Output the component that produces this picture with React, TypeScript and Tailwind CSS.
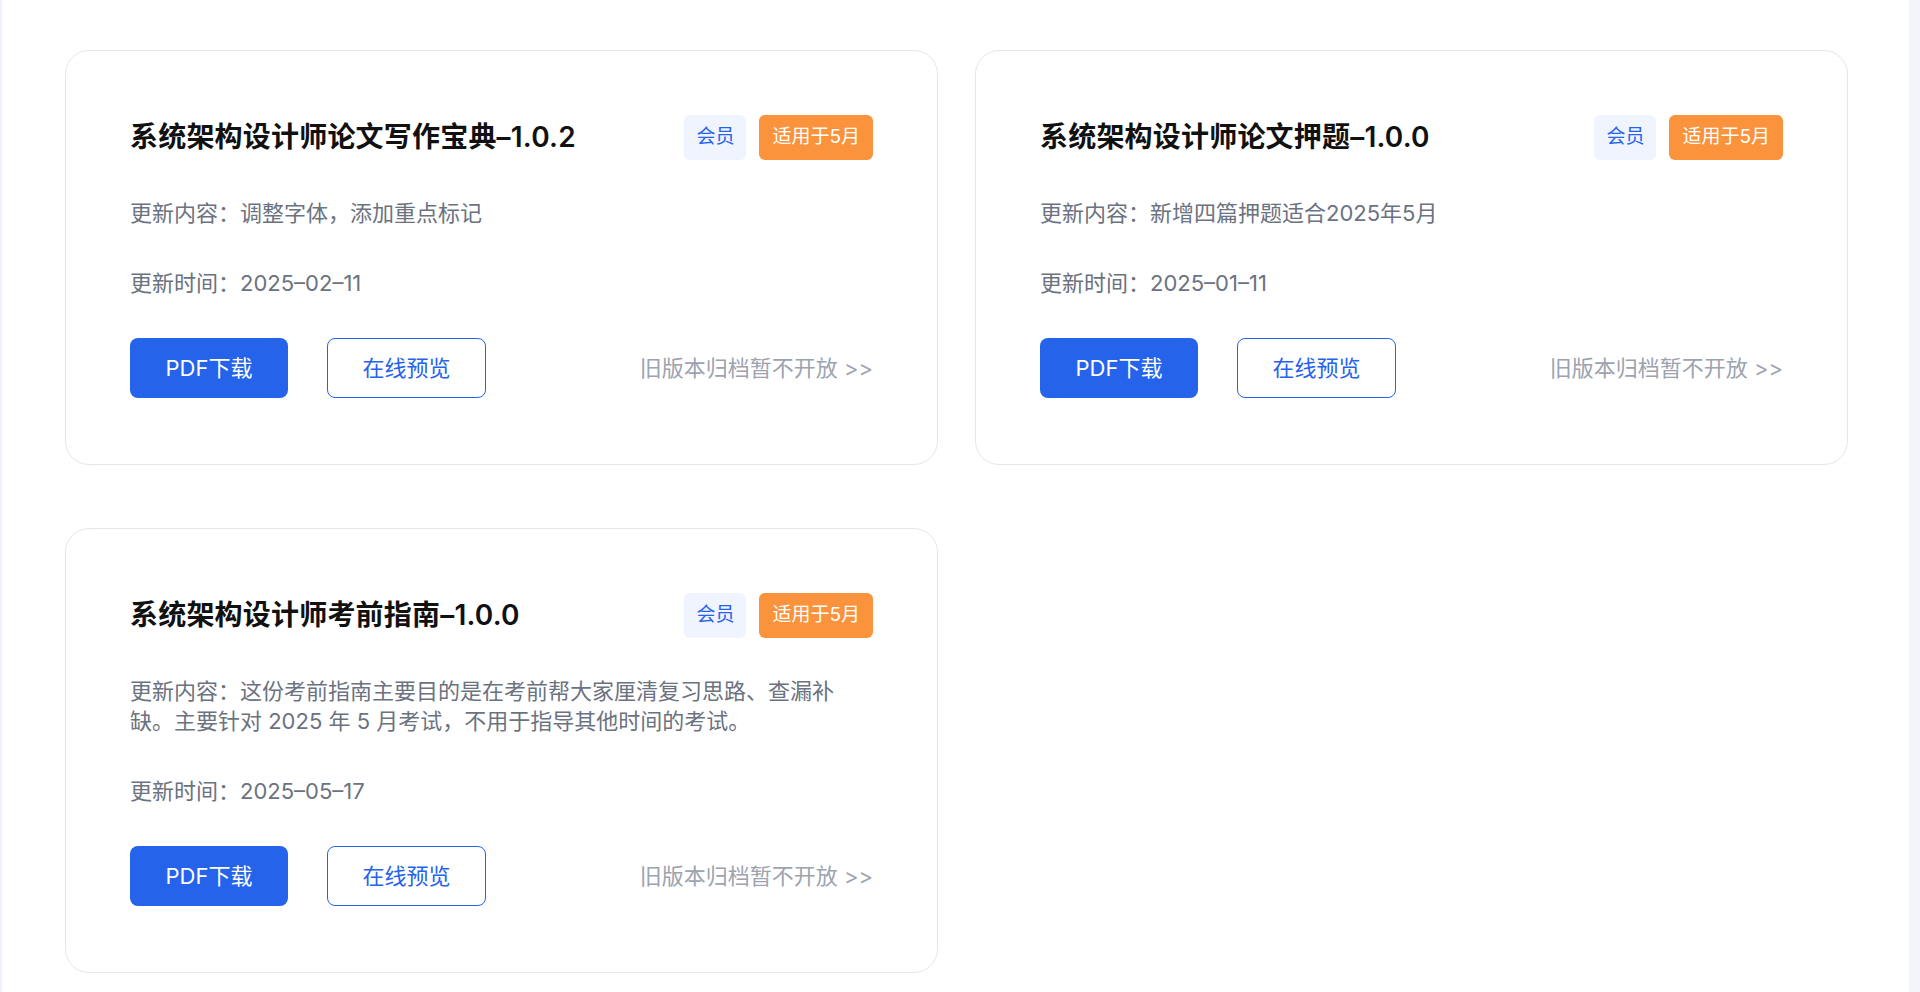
const docs = [
  {
    title: '系统架构设计师论文写作宝典–1.0.2',
    content: '调整字体，添加重点标记',
    date: '2025–02–11',
  },
  {
    title: '系统架构设计师论文押题–1.0.0',
    content: '新增四篇押题适合2025年5月',
    date: '2025–01–11',
  },
  {
    title: '系统架构设计师考前指南–1.0.0',
    content:
      '这份考前指南主要目的是在考前帮大家厘清复习思路、查漏补缺。主要针对 2025 年 5 月考试，不用于指导其他时间的考试。',
    date: '2025–05–17',
  },
];

function DocCard({ title, content, date }: { title: string; content: string; date: string }) {
  return (
    <div className="flex flex-col rounded-3xl border border-[#e5e7eb] bg-white px-16 pt-16 pb-[66px]">
      <div className="flex items-center justify-between">
        <h3 className="text-[28px] leading-[45px] font-semibold tracking-[0.2px] text-[#111111]">
          {title}
        </h3>
        <div className="flex items-center gap-[13px]">
          <span className="flex h-[45px] items-center rounded-md bg-[#eff4ff] px-[12px] text-[19px] text-[#2563eb]">
            会员
          </span>
          <span className="flex h-[45px] items-center rounded-md bg-[#fb923c] px-[13px] text-[19px] text-white">
            适用于5月
          </span>
        </div>
      </div>
      <p className="mt-[38px] text-[22px] leading-[30px] text-[#6b7280]">更新内容：{content}</p>
      <p className="mt-10 text-[22px] leading-[30px] text-[#6b7280]">更新时间：{date}</p>
      <div className="mt-10 flex items-center">
        <button className="flex h-[60px] w-[158px] items-center justify-center rounded-lg bg-[#2563eb] text-[22px] text-white">
          PDF下载
        </button>
        <button className="ml-[39px] flex h-[60px] w-[159px] items-center justify-center rounded-lg border-[1.5px] border-[#2563eb] bg-white text-[22px] text-[#2563eb]">
          在线预览
        </button>
        <span className="ml-auto text-[22px] text-[#9ca3af]">旧版本归档暂不开放 &gt;&gt;</span>
      </div>
    </div>
  );
}

export default function App() {
  return (
    <div
      className="flex h-[992px] w-full overflow-hidden bg-white"
      style={{ fontFamily: 'Inter, "Noto Sans CJK SC", sans-serif' }}
    >
      <div className="w-[2px] shrink-0 bg-[#eef2fa]" />
      <main className="flex-1 pt-[50px] pr-[61px] pl-[63px]">
        <div className="grid grid-cols-2 items-start gap-x-[37px] gap-y-[63px]">
          {docs.map((d) => (
            <DocCard key={d.title} {...d} />
          ))}
        </div>
      </main>
      <div className="w-[11px] shrink-0 bg-[#f3f5fa]" />
    </div>
  );
}
